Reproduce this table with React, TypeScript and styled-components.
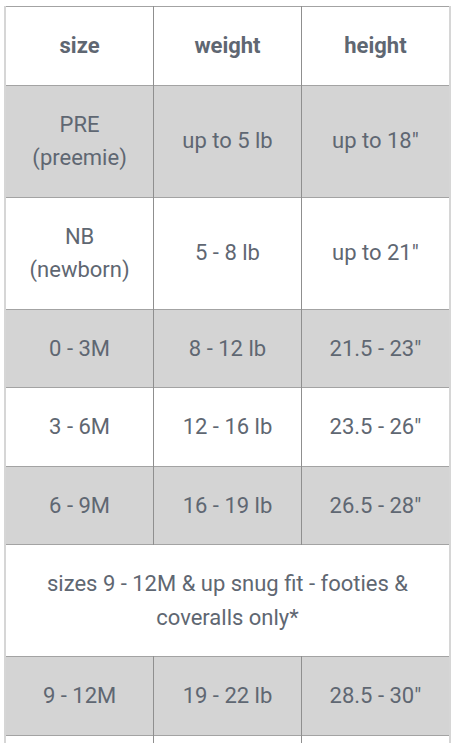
import React from "react";
import styled, { createGlobalStyle } from "styled-components";

const Global = createGlobalStyle`
  html, body { margin: 0; padding: 0; background: #fff; }
  body { font-family: Roboto, "Liberation Sans", sans-serif; }
`;

const Page = styled.div`
  padding: 6px 0 0 4px;
  width: 447px;
`;

const Frame = styled.div`
  border-left: 2px solid #d6d6d6;
  border-right: 2px solid #d6d6d6;
`;

const Table = styled.table`
  width: 100%;
  border-collapse: collapse;
  table-layout: fixed;
  color: #5f6772;
  font-size: 22px;
  line-height: 33.5px;
  text-align: center;
`;

const Row = styled.tr<{ $shaded?: boolean }>`
  background: ${(p) => (p.$shaded ? "#d4d4d4" : "#ffffff")};
  border-top: 1px solid #a3a3a3;
`;

const HeadCell = styled.th`
  font-weight: 700;
  padding: 22px 6px;
  border-left: 1px solid #8f8f8f;
  &:first-child { border-left: none; }
`;

const Cell = styled.td`
  font-weight: 400;
  padding: 22px 6px;
  border-left: 1px solid #8f8f8f;
  &:first-child { border-left: none; }
`;

const NoteCell = styled.td`
  padding: 22px 20px;
`;

type R = { size: string[]; weight: string; height: string };

const rowsA: R[] = [
  { size: ["PRE", "(preemie)"], weight: "up to 5 lb", height: 'up to 18"' },
  { size: ["NB", "(newborn)"], weight: "5 - 8 lb", height: 'up to 21"' },
  { size: ["0 - 3M"], weight: "8 - 12 lb", height: '21.5 - 23"' },
  { size: ["3 - 6M"], weight: "12 - 16 lb", height: '23.5 - 26"' },
  { size: ["6 - 9M"], weight: "16 - 19 lb", height: '26.5 - 28"' },
];

const rowsB: R[] = [
  { size: ["9 - 12M"], weight: "19 - 22 lb", height: '28.5 - 30"' },
  { size: ["12 - 18M"], weight: "22 - 27 lb", height: '30.5 - 32"' },
];

const DataRow = ({ r, shaded }: { r: R; shaded: boolean }) => (
  <Row $shaded={shaded}>
    <Cell>
      {r.size.map((s, i) => (
        <React.Fragment key={i}>
          {i > 0 && <br />}
          {s}
        </React.Fragment>
      ))}
    </Cell>
    <Cell>{r.weight}</Cell>
    <Cell>{r.height}</Cell>
  </Row>
);

export default function App() {
  return (
    <Page>
      <Global />
      <Frame>
        <Table>
          <thead>
            <Row>
              <HeadCell>size</HeadCell>
              <HeadCell>weight</HeadCell>
              <HeadCell>height</HeadCell>
            </Row>
          </thead>
          <tbody>
            {rowsA.map((r, i) => (
              <DataRow key={i} r={r} shaded={i % 2 === 0} />
            ))}
            <Row>
              <NoteCell colSpan={3}>
                sizes 9 - 12M &amp; up snug fit - footies &amp; coveralls only*
              </NoteCell>
            </Row>
            {rowsB.map((r, i) => (
              <DataRow key={i} r={r} shaded={i % 2 === 0} />
            ))}
          </tbody>
        </Table>
      </Frame>
    </Page>
  );
}
